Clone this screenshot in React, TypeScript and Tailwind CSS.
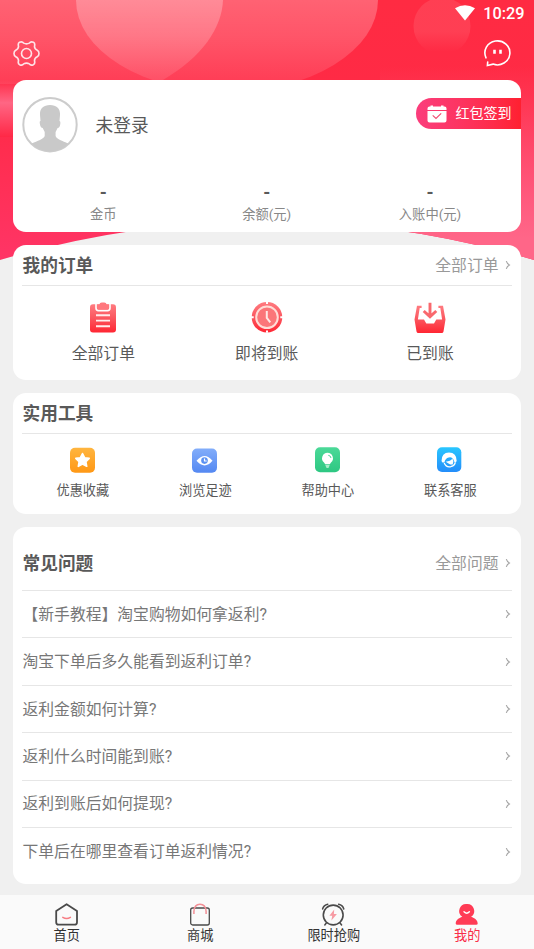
import React from 'react';

const Chevron = () => (
  <svg width="6" height="10" viewBox="0 0 6 10" fill="none" stroke="#a3a3a3" strokeWidth="1.1">
    <path d="M1.3 1.2Q2 3.6 4.4 5Q2 6.4 1.3 8.8" />
  </svg>
);

const Backdrop = () => (
  <svg className="absolute left-0 top-0" width="534" height="265" viewBox="0 0 534 265">
    <defs>
      <linearGradient id="base" x1="0" y1="0" x2="0" y2="1">
        <stop offset="0" stopColor="#ff2b42" />
        <stop offset=".4" stopColor="#ff2a46" />
        <stop offset="1" stopColor="#ff3567" />
      </linearGradient>
      <linearGradient id="right" x1="0" y1="0" x2="0" y2="1">
        <stop offset=".25" stopColor="#ff6688" stopOpacity="0" />
        <stop offset=".9" stopColor="#ff6688" />
      </linearGradient>
      <linearGradient id="fade" gradientUnits="userSpaceOnUse" x1="0" y1="0" x2="0" y2="90">
        <stop offset="0" stopColor="#fff" stopOpacity=".26" />
        <stop offset=".4" stopColor="#fff" stopOpacity=".2" />
        <stop offset="1" stopColor="#fff" stopOpacity=".07" />
      </linearGradient>
      <linearGradient id="dot" x1="0" y1="0" x2="0" y2="1">
        <stop offset=".2" stopColor="#ff5c6c" stopOpacity=".4" />
        <stop offset=".6" stopColor="#ff5c6c" stopOpacity=".4" />
        <stop offset=".95" stopColor="#ff5c6c" stopOpacity="0" />
      </linearGradient>
      <linearGradient id="glow" x1="0" y1="0" x2="0" y2="1">
        <stop offset="0" stopColor="#ff6684" stopOpacity="0" />
        <stop offset=".4" stopColor="#ff6684" />
        <stop offset="1" stopColor="#ff2846" />
      </linearGradient>
      <clipPath id="curve"><path d="M0 0H534V260Q267 182 0 260Z" /></clipPath>
    </defs>
    <g clipPath="url(#curve)">
      <path fill="url(#base)" d="M0 0H534V265H0Z" />
      <path fill="url(#right)" d="M380 0H534V265H380Z" />
      <path fill="url(#fade)" d="M0 0H223C222 28 202 57 163 80L155 84H0Z" />
      <ellipse cx="227" cy="0" rx="151" ry="92" fill="url(#fade)" />
      <circle cx="442" cy="26" r="28.5" fill="url(#dot)" />
      <path fill="url(#glow)" d="M0 80H20V137H0Z" />
    </g>
  </svg>
);

const SettingsIcon = () => (
  <svg width="27" height="25" viewBox="0 0 28 26" fill="none" stroke="#ffe4e8" strokeWidth="1.7" strokeLinejoin="round" className="-mt-px">
    <path d="M6.8 1.2Q9.8 .2 11 2.2Q14 3.7 17 2.2Q18.2 .2 21.2 1.2Q23.2 2.5 22.3 5.5Q22.3 8.3 25.2 9.6Q27 10.4 27 13Q27 15.6 25.2 16.4Q22.3 17.7 22.3 20.5Q23.2 23.5 21.2 24.6Q18.2 25.8 17 23.8Q14 22.3 11 23.8Q9.8 25.8 6.8 24.6Q4.8 23.5 5.7 20.5Q5.7 17.7 2.8 16.4Q1 15.6 1 13Q1 10.4 2.8 9.6Q5.7 8.3 5.7 5.5Q4.8 2.5 6.8 1.2Z" />
    <circle cx="14" cy="13" r="5.2" />
  </svg>
);

const ChatIcon = () => (
  <svg width="28" height="28" viewBox="0 0 28 28" fill="none" stroke="#fff" strokeWidth="1.6" strokeLinecap="round">
    <path d="M3 17.8A12.5 12 0 1 1 10 24.1L4.4 25.5L4.7 22" />
    <path strokeWidth="2.6" strokeLinecap="butt" d="M11.5 9.7V13.7M17.5 9.7V13.7" />
  </svg>
);

const Avatar = () => (
  <svg width="56" height="56" viewBox="0 0 56 56">
    <clipPath id="face"><circle cx="28" cy="27.7" r="26.6" /></clipPath>
    <circle cx="28" cy="27.7" r="26.7" fill="#fff" stroke="#ccc" strokeWidth="2" />
    <path clipPath="url(#face)" fill="#c9c9c9" d="M28 8C21 8 17.6 12 18 18L18.5 24Q17.3 24 17.9 27Q18.5 31 20.7 31L22.7 35V39C22 42 15 44 10 46.5L6 56H50L46 46.5C41 44 34 42 33.6 39V35L35.6 31Q37.8 31 38.3 27Q38.7 24 37.5 24L38 18C38.4 12 35 8 28 8Z" />
  </svg>
);

const RedFill = ({ id }: { id: string }) => (
  <linearGradient id={id} x1="0" y1="0" x2="0" y2="1">
    <stop offset="0" stopColor="#ff7b80" />
    <stop offset=".45" stopColor="#fb5a62" />
    <stop offset="1" stopColor="#ff2633" />
  </linearGradient>
);

const ClipboardIcon = () => (
  <svg width="32" height="34" viewBox="0 0 32 34">
    <defs><RedFill id="clip" /></defs>
    <rect x="3" y="3.2" width="26" height="28.2" rx="3" fill="url(#clip)" />
    <path d="M9 2.6V7Q9 9.6 11.4 9.6H20.6Q23 9.6 23 7V2.6" fill="none" stroke="#fff" strokeWidth="1.6" />
    <path fill="#ff777d" d="M10.3 3.4H12.4Q12.6 1.4 14.8 1.4H17.2Q19.4 1.4 19.6 3.4H21.7V7Q21.7 8.6 20 8.6H12Q10.3 8.6 10.3 7Z" />
    <path stroke="#ffeded" strokeWidth="1.9" d="M9 14.2H23M9 19.6H23M9 25.2H23" />
  </svg>
);

const ClockIcon = () => (
  <svg width="32" height="34" viewBox="0 0 32 34" fill="none">
    <defs><RedFill id="clock" /></defs>
    <circle cx="16" cy="16.3" r="15.3" fill="url(#clock)" />
    <circle cx="16" cy="16.3" r="10.8" fill="#fb7679" stroke="#ffdcd6" strokeWidth="2" />
    <path stroke="#fff" strokeWidth="2" d="M16 .8V3M16 29.6V31.8M0 16.3H2.7M29.3 16.3H32" />
    <path stroke="#ffe9e5" strokeWidth="2" d="M15.8 10V17L19.3 21.3" />
  </svg>
);

const InboxIcon = () => (
  <svg width="32" height="34" viewBox="0 0 32 34" fill="none">
    <defs><RedFill id="inbox" /></defs>
    <path fill="url(#inbox)" d="M3 4.7H7.6V7H5.7L3.9 18.5H10L12.3 22.5H20L22.3 18.5H28.1L26.3 7H24.4V4.7H29L31.5 18.5L29.5 30.5Q29.2 32 27.7 32H4.3Q2.8 32 2.5 30.5L.5 18.5Z" />
    <path stroke="#f9686d" strokeWidth="2.9" d="M16 1.7V15.5M9.7 10 16 15.7 22.3 10" />
  </svg>
);

const StarIcon = () => (
  <svg width="26" height="26" viewBox="0 0 26 26">
    <defs><linearGradient id="gold" x2="0" y2="1"><stop stopColor="#ffb53f" /><stop offset="1" stopColor="#ff9815" /></linearGradient></defs>
    <rect x="0" y=".8" width="25" height="25" rx="5" fill="url(#gold)" />
    <path fill="#fff" stroke="#fff" strokeWidth="1.6" strokeLinejoin="round" d="m12.5 6.5 2.1 4.2 4.6.7-3.3 3.3.8 4.6-4.2-2.2-4.2 2.2.8-4.6-3.3-3.3 4.6-.7Z" />
  </svg>
);

const EyeIcon = () => (
  <svg width="26" height="26" viewBox="0 0 26 26">
    <defs><linearGradient id="blue" x2="0" y2="1"><stop stopColor="#82adfa" /><stop offset="1" stopColor="#5488f2" /></linearGradient></defs>
    <rect x="0" y="1.5" width="25" height="24.3" rx="5" fill="url(#blue)" />
    <path fill="#fff" d="M4.5 13.8Q12.7 4 20.5 13.8Q12.7 23 4.5 13.8Z" />
    <circle cx="12.5" cy="13.6" r="3.3" fill="#5b91f2" />
    <path stroke="#fff" strokeWidth="1.2" fill="none" d="M12.5 11.6V14H14.7" />
  </svg>
);

const BulbIcon = () => (
  <svg width="26" height="26" viewBox="0 0 26 26">
    <defs><linearGradient id="green" x2="0" y2="1"><stop stopColor="#4bd998" /><stop offset="1" stopColor="#2dc782" /></linearGradient></defs>
    <rect x="0" y=".3" width="25" height="25" rx="5" fill="url(#green)" />
    <path fill="#fff" d="M12.5 5.8A5.5 5.5 0 0 0 9 15.5L10.2 17.3H14.8L16 15.5A5.5 5.5 0 0 0 12.5 5.8Z" />
    <path d="M13.3 8.3Q15.8 8.6 16 11" fill="none" stroke="#4ccf93" />
    <path fill="#a9ecca" d="M10.3 18H14.7L13.5 21H11.5Z" />
  </svg>
);

const ServiceIcon = () => (
  <svg width="26" height="26" viewBox="0 0 26 26">
    <defs><linearGradient id="sky" x2="0" y2="1"><stop stopColor="#29c6ff" /><stop offset="1" stopColor="#248dfa" /></linearGradient></defs>
    <rect x="0" y=".3" width="24.3" height="24.7" rx="5" fill="url(#sky)" />
    <path fill="#fff" d="M4.5 14Q4.5 5.7 12 5.5Q19.7 5.7 19.7 14L18 16.5 17 14Q15.5 9.5 11.7 10.5Q8.2 11.3 7.4 15.5H5.4Z" />
    <path fill="#fff" d="M8.7 14.7Q13.7 14.2 15.4 11.5L16.4 14.5 15.7 17.5H13.2L10.7 16Z" />
    <path d="M7.2 16Q9.2 20.7 14 19.6M13.7 19.7Q17.2 19 18.2 16" fill="none" stroke="#fff" strokeWidth="1.3" />
  </svg>
);

const CalendarIcon = () => (
  <svg width="20" height="18" viewBox="0 0 20 18">
    <path fill="#fff" d="M.5 3.5Q.5 1.5 2.5 1.5H3.5V.5H6V1.5H14V.5H16.5V1.5H17.5Q19.5 1.5 19.5 3.5V5H.5ZM.5 6H19.5V15.5Q19.5 17.5 17.5 17.5H2.5Q.5 17.5.5 15.5Z" />
    <path d="M5.7 10.3 9 13.5 14.2 8.3" fill="none" stroke="#f04a70" strokeWidth="1.1" />
  </svg>
);

const HomeIcon = () => (
  <svg width="26" height="24" viewBox="0 0 26 24" fill="none">
    <path stroke="#4a4a4a" strokeWidth="1.8" strokeLinejoin="round" d="M12.6 1.2 2.2 7.9V19.2Q2.2 21.7 4.7 21.7H20.5Q23 21.7 23 19.2V7.9Z" />
    <path stroke="#f77d84" strokeWidth="1.5" strokeLinecap="round" d="M8.8 14.4Q12.6 16.8 16.4 14.4" />
  </svg>
);

const BagIcon = () => (
  <svg width="26" height="24" viewBox="0 0 26 24" fill="none">
    <rect x="3.7" y="5" width="18.6" height="17" rx="2" stroke="#4a4a4a" strokeWidth="1.3" />
    <path stroke="#f28f96" strokeWidth="1.5" d="M6.9 11V8.5Q7.2 1.2 13 1.2T19.1 8.5V11" />
  </svg>
);

const AlarmIcon = () => (
  <svg width="26" height="24" viewBox="0 0 26 24" fill="none">
    <circle cx="12.2" cy="12" r="9.9" stroke="#4a4a4a" strokeWidth="1.6" />
    <path stroke="#4a4a4a" strokeWidth="1.5" strokeLinecap="round" d="M1.6 6Q2.6 2 6.8 1.2M22.8 6Q21.8 2 17.6 1.2M5.5 19.8 3.8 22M18.9 19.8 20.6 22" />
    <path fill="#f79aa3" d="M13.2 6.5 8.4 12.7H11.2L10.4 17.5 15.9 11.1H12.9Z" />
  </svg>
);

const UserIcon = () => (
  <svg width="26" height="24" viewBox="0 0 26 24">
    <path fill="#ff3b55" d="M12.7 1A7 7 0 0 0 8.3 13.8C4.7 15.2 1.9 17 1.7 20.4Q1.7 21.7 3.3 21.7H22.1Q23.7 21.7 23.7 20.4C23.5 17 20.7 15.2 17.1 13.8A7 7 0 0 0 12.7 1Z" />
    <path d="M10 8.8Q12.7 11.5 15.4 8.8" fill="none" stroke="#fff" strokeWidth="1.4" strokeLinecap="round" />
  </svg>
);

const orders = [
  { icon: <ClipboardIcon />, label: '全部订单' },
  { icon: <ClockIcon />, label: '即将到账' },
  { icon: <InboxIcon />, label: '已到账' },
];
const tools = [
  { icon: <StarIcon />, label: '优惠收藏' },
  { icon: <EyeIcon />, label: '浏览足迹' },
  { icon: <BulbIcon />, label: '帮助中心' },
  { icon: <ServiceIcon />, label: '联系客服' },
];
const questions = [
  '【新手教程】淘宝购物如何拿返利?',
  '淘宝下单后多久能看到返利订单?',
  '返利金额如何计算?',
  '返利什么时间能到账?',
  '返利到账后如何提现?',
  '下单后在哪里查看订单返利情况?',
];
const tabs = [
  { icon: <HomeIcon />, label: '首页' },
  { icon: <BagIcon />, label: '商城' },
  { icon: <AlarmIcon />, label: '限时抢购' },
  { icon: <UserIcon />, label: '我的', active: true },
];

const More = ({ text }: { text: string }) => (
  <div className="flex items-center gap-[6.5px] pr-px text-[15.8px] text-[#999]">
    <span className="pt-[2px]">{text}</span>
    <Chevron />
  </div>
);

export default function App() {
  return (
    <div className="relative h-[949px] w-[534px] overflow-hidden bg-[#f0f0f0] font-[Roboto,'Noto_Sans_CJK_SC',sans-serif] text-[#595959]">
      <Backdrop />
      <div className="relative flex h-full flex-col">
        <div className="flex h-7 items-center justify-end gap-[8px] pr-[9.5px] text-white">
          <svg width="20" height="16" viewBox="0 0 20 16" className="-mt-[3px]">
            <path fill="#fff" d="M0 3.2Q10-2.8 20 3.2L10 15.5Z" />
          </svg>
          <span className="text-[16.3px] font-medium leading-7">10:29</span>
        </div>
        <div className="flex h-[52px] items-center justify-between pl-[13px] pr-[23px]">
          <SettingsIcon />
          <ChatIcon />
        </div>

        <section className="mx-[13px] flex h-[152px] flex-col rounded-[13px] bg-white">
          <div className="flex items-start pt-[17px]">
            <div className="pl-[9px]"><Avatar /></div>
            <div className="ml-[17.5px] flex h-[56px] items-center pt-[2px] text-[17.7px]">未登录</div>
            <div className="ml-auto mt-[1px] flex h-[31px] w-[105px] items-center gap-[8.5px] rounded-l-full bg-linear-to-r from-[#fb3d7c] to-[#ff2030] pl-[11px] text-[14px] text-white">
              <CalendarIcon />
              <span className="whitespace-nowrap">红包签到</span>
            </div>
          </div>
          <div className="mt-[27px] grid grid-cols-3 px-[9px] text-center">
            {['金币', '余额(元)', '入账中(元)'].map((label) => (
              <div key={label} className="pr-[.6px]">
                <div className="h-[25px] text-[18px] font-bold leading-[25px]">-</div>
                <div className="text-[13.3px] leading-5 text-[#888]">{label}</div>
              </div>
            ))}
          </div>
        </section>

        <section className="mx-[13px] mt-[13px] h-[135px] rounded-[13px] bg-white px-[9px]">
          <div className="flex h-[41px] items-center justify-between border-b border-[#e6e6e6]">
            <h2 className="pl-[.5px] pt-[2px] text-[17.7px] font-bold">我的订单</h2>
            <More text="全部订单" />
          </div>
          <div className="grid grid-cols-3 pt-[15px]">
            {orders.map((item) => (
              <div key={item.label} className="flex flex-col items-center pr-[.6px]">
                {item.icon}
                <span className="mt-[6.5px] text-[15.8px] leading-6">{item.label}</span>
              </div>
            ))}
          </div>
        </section>

        <section className="mx-[13px] mt-[13px] h-[121px] rounded-[13px] bg-white px-[9px]">
          <h2 className="flex h-[41px] items-center border-b border-[#e6e6e6] pl-[.5px] pt-[2px] text-[17.7px] font-bold">实用工具</h2>
          <div className="grid grid-cols-4 pt-[13px]">
            {tools.map((item) => (
              <div key={item.label} className="flex flex-col items-center pr-[.8px]">
                {item.icon}
                <span className="mt-[8px] text-[13.2px] leading-5">{item.label}</span>
              </div>
            ))}
          </div>
        </section>

        <section className="mx-[13px] mt-[13px] h-[357px] rounded-[13px] bg-white px-[9px]">
          <div className="flex h-[64px] items-center justify-between border-b border-[#e6e6e6] pt-[9px]">
            <h2 className="pl-[.5px] pt-[2px] text-[17.7px] font-bold">常见问题</h2>
            <More text="全部问题" />
          </div>
          {questions.map((question) => (
            <div key={question} className="flex h-[47.4px] items-center justify-between border-b border-[#e6e6e6] pl-[.5px] pr-px text-[15.8px] text-[#777] last:border-b-0">
              <span className="pt-[1px]">{question}</span>
              <Chevron />
            </div>
          ))}
        </section>

        <nav className="mt-auto grid h-[54px] grid-cols-4 bg-[#fafafa]">
          {tabs.map((tab) => (
            <div key={tab.label} className="flex flex-col items-center pt-[8px]">
              {tab.icon}
              <span className={tab.active ? 'text-[13.2px] leading-[18px] text-[#f92d48]' : 'text-[13.2px] leading-[18px] text-[#333]'}>{tab.label}</span>
            </div>
          ))}
        </nav>
      </div>
    </div>
  );
}
